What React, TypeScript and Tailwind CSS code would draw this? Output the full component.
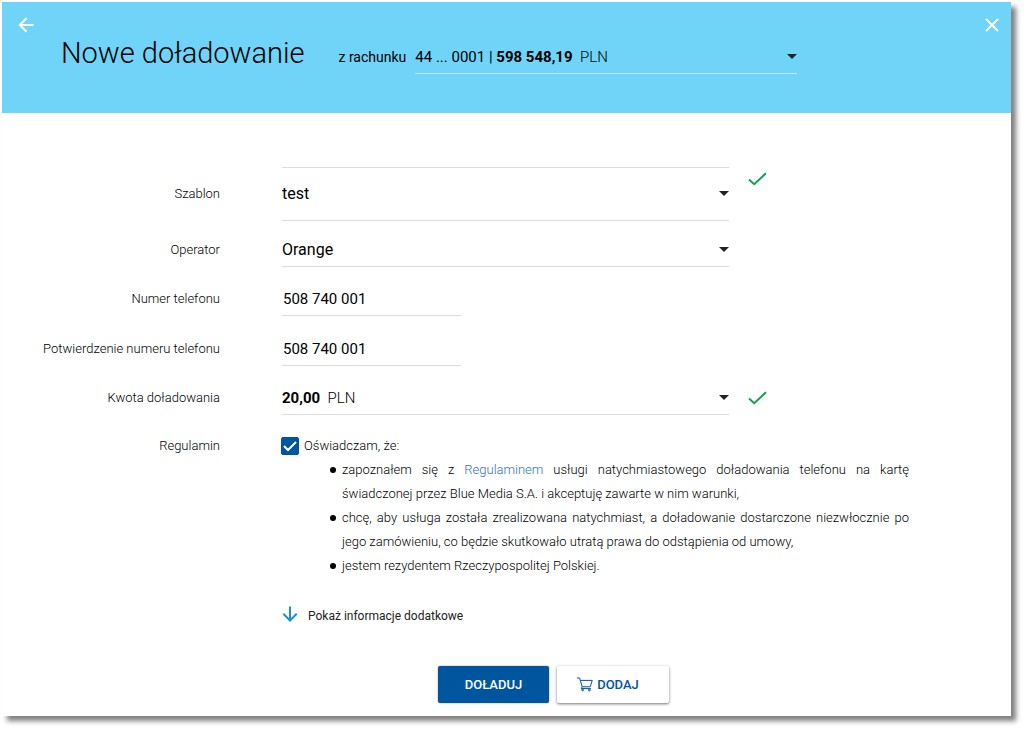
import React, { useState } from 'react';

interface FieldRowProps {
  id: string;
  label: string;
  valid?: boolean;
  tall?: boolean;
  className?: string;
  children: React.ReactNode;
}

const Caret = () => (
  <svg viewBox="0 0 10 5" className="pointer-events-none absolute right-0 top-1/2 -mt-[3px] h-[5px] w-[10px] fill-[#222]" aria-hidden="true">
    <path d="M0 0h10L5 5z" />
  </svg>
);

const CheckMark = () => (
  <svg viewBox="0 0 19 14" className="h-[14px] w-[19px] shrink-0 fill-none stroke-[#12a150]" strokeWidth="2" aria-hidden="true">
    <path d="M1 7.5l5.2 4.7L18 1.2" />
  </svg>
);

const CartIcon = () => (
  <svg viewBox="0 0 16 15" className="h-[15px] w-[16px] fill-none stroke-[#00559f]" strokeWidth="1" aria-hidden="true">
    <path d="M0 1h2.6l2.6 8.8h8L15.3 3.4H3.4M5.2 9.8l-1 1.8h9.6" />
    <circle cx="5.6" cy="13" r="0.9" />
    <circle cx="12.4" cy="13" r="0.9" />
  </svg>
);

const FieldRow: React.FC<FieldRowProps> = ({ id, label, valid, tall, className = '', children }) => (
  <div className={`flex items-center ${className}`}>
    <label htmlFor={id} className="w-[218px] shrink-0 text-right text-[13px] leading-5 font-light text-black">
      {label}
    </label>
    <div className="ml-[62px] w-full max-w-[447px]">{children}</div>
    {valid && <div className={tall ? 'ml-[19px] -mt-[30px]' : 'ml-[19px]'}><CheckMark /></div>}
  </div>
);

const selectText = 'text-base leading-5 text-black outline-none';
const phoneText = 'text-[15px] leading-5 text-black outline-none';

// Native select laid over a value that mixes font weights
const RichSelect: React.FC<{ id: string; option: string; className: string; children: React.ReactNode }> = ({ id, option, className, children }) => (
  <div className={`relative flex items-center border-b ${className}`}>
    <span aria-hidden="true" className="whitespace-pre text-[15px] leading-5 text-black">{children}</span>
    <select id={id} className="absolute inset-0 w-full cursor-pointer opacity-0">
      <option>{option}</option>
    </select>
    <Caret />
  </div>
);

const TermsItem: React.FC<{ children: React.ReactNode }> = ({ children }) => (
  <li className="flex gap-[6px]">
    <span className="mt-[9px] size-[6px] shrink-0 rounded-full bg-black" />
    <span className="flex-1">{children}</span>
  </li>
);

const App: React.FC = () => {
  const [accepted, setAccepted] = useState(true);
  const [phone, setPhone] = useState('508 740 001');
  const [phoneConfirm, setPhoneConfirm] = useState('508 740 001');

  return (
    <div className="bg-white pt-[2px] pr-[13px] pb-[14px] pl-[2px] font-[Roboto,sans-serif]">
      <div className="bg-white shadow-[5px_5px_5px_0px_rgba(0,0,0,0.5)]">
        <header className="flex h-[111px] items-start bg-[#6fd4f7] text-black">
          <button type="button" aria-label="Wstecz" className="ml-4 mt-[15px] text-white">
            <svg viewBox="0 0 16 16" className="size-4 fill-none stroke-current" strokeWidth="2" aria-hidden="true">
              <path d="M15.5 8H2M8.5 1.3L1.8 8l6.7 6.7" />
            </svg>
          </button>
          <h1 className="ml-[27px] mt-[31px] whitespace-nowrap text-[29px] leading-10 font-light">Nowe doładowanie</h1>
          <label htmlFor="account" className="ml-[34px] mt-[45px] whitespace-nowrap text-sm leading-5">z rachunku</label>
          <div className="ml-[9px] mt-[38px] w-full max-w-[382px]">
            <RichSelect id="account" option="44 ... 0001 | 598 548,19 PLN" className="h-[34px] border-[#c5e6f5]">
              44 ... 0001 | <span className="font-bold">598 548,19</span>{'  '}<span className="font-light">PLN</span>
            </RichSelect>
          </div>
          <button type="button" aria-label="Zamknij" className="ml-auto mr-3 mt-4 text-white">
            <svg viewBox="0 0 14 14" className="size-[14px] fill-none stroke-current" strokeWidth="2" aria-hidden="true">
              <path d="M1 1l12 12M13 1L1 13" />
            </svg>
          </button>
        </header>

        <form onSubmit={e => e.preventDefault()} className="pt-[54px] pb-[13px]">
          <FieldRow id="template" label="Szablon" valid tall>
            <div className="relative flex h-[54px] items-center border-y border-[#dcdcdc]">
              <select id="template" className={`w-full appearance-none ${selectText}`}>
                <option>test</option>
              </select>
              <Caret />
            </div>
          </FieldRow>
          <FieldRow id="operator" label="Operator" className="mt-3">
            <div className="relative flex h-[34px] items-center border-b border-[#dcdcdc]">
              <select id="operator" className={`w-full appearance-none ${selectText}`}>
                <option>Orange</option>
              </select>
              <Caret />
            </div>
          </FieldRow>
          <FieldRow id="phone" label="Numer telefonu" className="mt-[15px]">
            <input
              id="phone"
              type="tel"
              value={phone}
              onChange={e => setPhone(e.target.value)}
              className={`block h-[34px] w-[179px] border-b border-[#dcdcdc] px-px ${phoneText}`}
            />
          </FieldRow>
          <FieldRow id="phone-confirm" label="Potwierdzenie numeru telefonu" className="mt-4">
            <input
              id="phone-confirm"
              type="tel"
              value={phoneConfirm}
              onChange={e => setPhoneConfirm(e.target.value)}
              className={`block h-[34px] w-[179px] border-b border-[#dcdcdc] px-px ${phoneText}`}
            />
          </FieldRow>
          <FieldRow id="amount" label="Kwota doładowania" valid className="mt-[15px]">
            <RichSelect id="amount" option="20,00 PLN" className="h-[34px] border-[#dcdcdc]">
              <span className="font-bold">20,00</span>{'  '}<span className="font-light">PLN</span>
            </RichSelect>
          </FieldRow>

          <div className="mt-[19px] flex items-start text-[13px] leading-6 font-light text-black">
            <div className="w-[218px] shrink-0 text-right">Regulamin</div>
            <div className="ml-[61px] max-w-[628px] flex-1">
              <div className="flex items-center gap-[5px]">
                <div className="relative size-[18px]">
                  <input
                    id="terms"
                    type="checkbox"
                    checked={accepted}
                    onChange={e => setAccepted(e.target.checked)}
                    className="block size-[18px] appearance-none rounded-[2px] border border-[#00559f] checked:bg-[#00559f]"
                  />
                  {accepted && (
                    <svg viewBox="0 0 18 18" className="pointer-events-none absolute inset-0 size-[18px] fill-none stroke-white" strokeWidth="2" aria-hidden="true">
                      <path d="M3 9l4 4 8-8" />
                    </svg>
                  )}
                </div>
                <label htmlFor="terms">Oświadczam, że:</label>
              </div>
              <ul className="pl-[49px] text-justify">
                <TermsItem>
                  zapoznałem się z <a href="#regulamin" className="text-[#2f74bd]">Regulaminem</a> usługi natychmiastowego doładowania telefonu na kartę świadczonej przez Blue Media S.A. i akceptuję zawarte w nim warunki,
                </TermsItem>
                <TermsItem>
                  chcę, aby usługa została zrealizowana natychmiast, a doładowanie dostarczone niezwłocznie po jego zamówieniu, co będzie skutkowało utratą prawa do odstąpienia od umowy,
                </TermsItem>
                <TermsItem>jestem rezydentem Rzeczypospolitej Polskiej.</TermsItem>
              </ul>
            </div>
          </div>

          <button type="button" className="mt-[26px] ml-[280px] flex items-center gap-[10px] text-xs leading-6 text-[#222]">
            <svg viewBox="0 0 16 16" className="-mt-1 size-4 fill-none stroke-[#1b8fcf]" strokeWidth="2" aria-hidden="true">
              <path d="M8 0.5V14M1.3 7.8L8 14.5l6.7-6.7" />
            </svg>
            Pokaż informacje dodatkowe
          </button>

          <div className="mt-[38px] ml-[436px] flex gap-2 text-[13px] font-medium">
            <button type="submit" className="h-[37px] w-[111px] rounded-[2px] bg-[#00559f] text-white shadow-[0_0_2px_rgba(0,0,0,0.4)]">DOŁADUJ</button>
            <button type="button" className="flex h-[37px] w-[112px] items-center justify-center gap-1 rounded-[2px] bg-white pr-[10px] text-[#00559f] shadow-[0_1px_3px_rgba(0,0,0,0.55)]">
              <CartIcon />
              DODAJ
            </button>
          </div>
        </form>
      </div>
    </div>
  );
};

export default App;
